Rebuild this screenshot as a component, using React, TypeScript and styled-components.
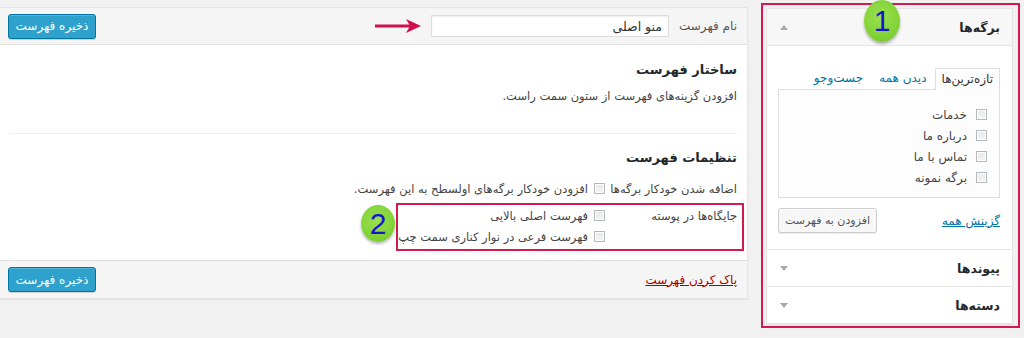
import React from "react";
import styled, { createGlobalStyle } from "styled-components";

const GlobalStyle = createGlobalStyle`
  html, body {
    margin: 0;
    padding: 0;
    background: #f1f1f1;
  }
  body {
    font-family: "DejaVu Sans", "Noto Sans", sans-serif;
    font-size: 12px;
    color: #444;
  }
  * {
    box-sizing: border-box;
  }
`;

const annotationRed = "#d5194f";

const Page = styled.div`
  direction: rtl;
  display: flex;
  align-items: flex-start;
  gap: 13px;
  padding: 3px 4px 0 0;
  width: 1024px;
  height: 338px;
  overflow: hidden;
`;

/* ---------- sidebar ---------- */

const RedFrame = styled.div`
  position: relative;
  flex: 0 0 259px;
  border: 2px solid ${annotationRed};
  padding: 3px 5px 1px 3px;
`;

const Accordion = styled.div`
  background: #fff;
  border: 1px solid #e5e5e5;
  box-shadow: 0 1px 1px rgba(0, 0, 0, 0.04);
`;

const SectionHead = styled.div<{ $open?: boolean }>`
  display: flex;
  align-items: center;
  justify-content: space-between;
  height: 37px;
  padding: 0 12px 0 13px;
  font-weight: bold;
  font-size: 12.5px;
  color: #23282d;
  background: ${({ $open }) => ($open ? "#f7f7f7" : "#fff")};
  border-bottom: 1px solid #e5e5e5;
`;

const Caret = styled.span<{ $up?: boolean }>`
  width: 0;
  height: 0;
  border-left: 4px solid transparent;
  border-right: 4px solid transparent;
  ${({ $up }) =>
    $up
      ? "border-bottom: 5px solid #aaa;"
      : "border-top: 5px solid #aaa;"}
`;

const SectionBody = styled.div`
  padding: 22px 12px 16px 11px;
  border-bottom: 1px solid #e5e5e5;
`;

const Tabs = styled.div`
  display: flex;
  align-items: flex-end;
  height: 21px;
`;

const Tab = styled.span<{ $active?: boolean }>`
  height: ${({ $active }) => ($active ? "22px" : "21px")};
  line-height: 20px;
  padding: 0 6px;
  margin-left: ${({ $active }) => ($active ? "2px" : "4px")};
  color: ${({ $active }) => ($active ? "#333" : "#0074a2")};
  background: ${({ $active }) => ($active ? "#fdfdfd" : "transparent")};
  border: ${({ $active }) => ($active ? "1px solid #dfdfdf" : "none")};
  border-bottom: none;
  position: relative;
  z-index: 1;
  margin-bottom: ${({ $active }) => ($active ? "-1px" : "0")};
`;

const TabPanel = styled.div`
  height: 109px;
  border: 1px solid #dfdfdf;
  background: #fdfdfd;
  padding: 14px 12px 0;
`;

const PageItem = styled.label`
  display: flex;
  align-items: center;
  gap: 9px;
  height: 21px;
  color: #444;
`;

const Check = styled.span`
  flex: 0 0 11px;
  width: 11px;
  height: 11px;
  border: 1px solid #b4b9be;
  background: linear-gradient(#e9e9e9, #f4f4f4);
  box-shadow: inset 0 0 0 1px #fff;
`;

const ButtonRow = styled.div`
  display: flex;
  align-items: center;
  justify-content: space-between;
  margin-top: 10px;
`;

const Link = styled.a<{ $danger?: boolean }>`
  color: ${({ $danger }) => ($danger ? "#a00" : "#0074a2")};
  text-decoration: underline;
  font-size: 12px;
  cursor: pointer;
`;

const SecondaryButton = styled.button`
  height: 25px;
  padding: 0 6px;
  font-family: inherit;
  font-size: 11px;
  color: #555;
  background: #f7f7f7;
  border: 1px solid #ccc;
  border-radius: 3px;
  box-shadow: inset 0 1px 0 #fff, 0 1px 0 rgba(0, 0, 0, 0.08);
`;

/* ---------- main panel ---------- */

const MenuPanel = styled.div`
  flex: 0 0 748px;
  margin-top: 4px;
  background: #fff;
  border: 1px solid #e5e5e5;
  border-left: none;
  box-shadow: 0 1px 1px rgba(0, 0, 0, 0.06);
`;

const Bar = styled.div<{ $bottom?: boolean }>`
  display: flex;
  align-items: center;
  gap: 10px;
  height: ${({ $bottom }) => ($bottom ? "38px" : "37px")};
  padding: 0 10px 0 8px;
  background: #f5f5f5;
  ${({ $bottom }) =>
    $bottom ? "border-top: 1px solid #dfdfdf;" : "border-bottom: 1px solid #dfdfdf;"}
`;

const FieldLabel = styled.span`
  color: #555;
  font-size: 12px;
`;

const NameInput = styled.input`
  width: 238px;
  height: 22px;
  padding: 0 6px;
  font-family: inherit;
  font-size: 12.5px;
  color: #333;
  background: #fff;
  border: 1px solid #ddd;
  box-shadow: inset 0 1px 2px rgba(0, 0, 0, 0.07);
  outline: none;
`;

const PrimaryButton = styled.button`
  margin-right: auto;
  width: 88px;
  height: 25px;
  font-family: inherit;
  font-size: 12px;
  color: #fff;
  background: #2ea2cc;
  border: 1px solid #0074a2;
  border-radius: 3px;
  box-shadow: inset 0 1px 0 rgba(120, 200, 230, 0.5), 0 1px 0 rgba(0, 0, 0, 0.15);
`;

const Body = styled.div`
  padding: 15px 10px 9px;
`;

const Heading = styled.h3`
  margin: 0;
  font-size: 13px;
  font-weight: bold;
  line-height: 20px;
  color: #23282d;
`;

const Description = styled.p`
  margin: 7px 0 0;
  line-height: 18px;
  font-size: 11.5px;
  color: #444;
`;

const Divider = styled.hr`
  margin: 28px 0 14px;
  border: none;
  border-top: 1px solid #eee;
`;

const SettingRow = styled.div`
  display: flex;
  align-items: center;
  height: 21px;
  font-size: 11.5px;
`;

const SettingLabel = styled.span`
  flex: 0 0 132px;
  color: #444;
`;

const Option = styled.label`
  display: flex;
  align-items: center;
  gap: 6px;
  color: #444;
`;

const Settings = styled.div`
  margin-top: 10px;
`;

const Highlight = styled.div`
  position: relative;
  width: fit-content;
  margin: 4px -7px 0 0;
  padding: 0 5px 2px 0;
  border: 2px solid ${annotationRed};
`;

const Badge = styled.span<{ $w: number; $h: number }>`
  position: absolute;
  width: ${({ $w }) => $w}px;
  height: ${({ $h }) => $h}px;
  border-radius: 50%;
  background: radial-gradient(circle at 45% 40%, #9be04f 0%, #84d43a 55%, #70c424 100%);
  box-shadow: 0 2px 3px rgba(0, 0, 0, 0.3);
  display: flex;
  align-items: center;
  justify-content: center;
  font-family: "Liberation Sans", Arial, sans-serif;
  font-size: 30px;
  line-height: 1;
  color: #1515d0;
  direction: ltr;
  z-index: 2;
`;

const BadgeOne = styled(Badge)`
  top: -5px;
  left: 101px;
`;

const BadgeTwo = styled(Badge)`
  top: 0;
  left: -37px;
`;

const Arrow = () => (
  <svg width="46" height="16" viewBox="0 0 46 16">
    <line x1="0" y1="8" x2="36" y2="8" stroke="#d0104c" strokeWidth="3" />
    <polygon points="46,8 31,1 35,8 31,15" fill="#d0104c" />
  </svg>
);

const pages = ["خدمات", "درباره ما", "تماس با ما", "برگه نمونه"];

export default function App() {
  return (
    <>
      <GlobalStyle />
      <Page>
        <RedFrame>
          <BadgeOne $w={36} $h={42}>1</BadgeOne>
          <Accordion>
            <SectionHead $open>
              <span>برگه‌ها</span>
              <Caret $up />
            </SectionHead>
            <SectionBody>
              <Tabs>
                <Tab $active>تازه‌ترین‌ها</Tab>
                <Tab>دیدن همه</Tab>
                <Tab>جست‌وجو</Tab>
              </Tabs>
              <TabPanel>
                {pages.map((p) => (
                  <PageItem key={p}>
                    <Check />
                    {p}
                  </PageItem>
                ))}
              </TabPanel>
              <ButtonRow>
                <Link>گزینش همه</Link>
                <SecondaryButton>افزودن به فهرست</SecondaryButton>
              </ButtonRow>
            </SectionBody>
            <SectionHead>
              <span>پیوندها</span>
              <Caret />
            </SectionHead>
            <SectionHead>
              <span>دسته‌ها</span>
              <Caret />
            </SectionHead>
          </Accordion>
        </RedFrame>

        <MenuPanel>
          <Bar>
            <FieldLabel>نام فهرست</FieldLabel>
            <NameInput defaultValue="منو اصلی" />
            <Arrow />
            <PrimaryButton>ذخیره فهرست</PrimaryButton>
          </Bar>
          <Body>
            <Heading>ساختار فهرست</Heading>
            <Description>افزودن گزینه‌های فهرست از ستون سمت راست.</Description>
            <Divider />
            <Heading>تنظیمات فهرست</Heading>
            <Settings>
              <SettingRow>
                <SettingLabel>اضافه شدن خودکار برگه‌ها</SettingLabel>
                <Option>
                  <Check />
                  افزودن خودکار برگه‌های اولسطح به این فهرست.
                </Option>
              </SettingRow>
              <Highlight>
                <BadgeTwo $w={34} $h={37}>2</BadgeTwo>
                <SettingRow>
                  <SettingLabel>جایگاه‌ها در پوسته</SettingLabel>
                  <Option>
                    <Check />
                    فهرست اصلی بالایی
                  </Option>
                </SettingRow>
                <SettingRow>
                  <SettingLabel />
                  <Option>
                    <Check />
                    فهرست فرعی در نوار کناری سمت چپ
                  </Option>
                </SettingRow>
              </Highlight>
            </Settings>
          </Body>
          <Bar $bottom>
            <Link $danger>پاک کردن فهرست</Link>
            <PrimaryButton>ذخیره فهرست</PrimaryButton>
          </Bar>
        </MenuPanel>
      </Page>
    </>
  );
}
